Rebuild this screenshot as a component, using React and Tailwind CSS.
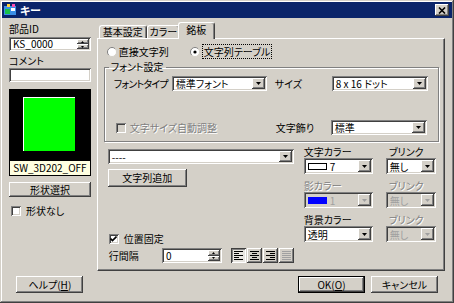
import React from 'react';

const SUNKEN = 'shadow-[inset_1px_1px_0_#808080,inset_-1px_-1px_0_#ffffff,inset_2px_2px_0_#404040,inset_-2px_-2px_0_#d4d0c8]';
const RAISED = 'shadow-[inset_-1px_-1px_0_#404040,inset_1px_1px_0_#ffffff,inset_-2px_-2px_0_#808080]';
const PRESSED = 'shadow-[inset_1px_1px_0_#404040,inset_-1px_-1px_0_#ffffff,inset_2px_2px_0_#808080]';
const GRAY = 'text-[#808080] [text-shadow:1px_1px_0_#ffffff]';

function Tri({ up, color = '#000', w = 5, h = 3 }) {
  return (
    <svg width={w} height={h} viewBox={`0 0 ${w} ${h}`} className="block">
      <path d={up ? `M${w / 2} 0L${w} ${h}H0z` : `M0 0H${w}L${w / 2} ${h}z`} fill={color} />
    </svg>
  );
}

function Select({ className = '', disabled, children }) {
  return (
    <div className={`flex p-[2px] ${disabled ? 'bg-[#d4d0c8]' : 'bg-white'} ${SUNKEN} ${className}`}>
      <div className={`flex-1 min-w-0 flex items-center pl-[2px] gap-[3px] leading-[11px] ${disabled ? 'text-[#a0a0a0]' : ''}`}>
        {children}
      </div>
      <span className={`w-[13px] h-full bg-[#d4d0c8] flex items-center justify-center ${RAISED}`}>
        <Tri color={disabled ? '#a0a0a0' : '#000'} />
      </span>
    </div>
  );
}

function Spin({ className = '', value }) {
  return (
    <div className={`flex p-[2px] bg-white ${SUNKEN} ${className}`}>
      <div className="flex-1 flex items-center pl-[2px] leading-[10px]">{value}</div>
      <div className="w-[12px] flex flex-col">
        <span className={`flex-1 bg-[#d4d0c8] flex items-center justify-center ${RAISED}`}>
          <Tri up w={3} h={2} />
        </span>
        <span className={`flex-1 bg-[#d4d0c8] flex items-center justify-center ${RAISED}`}>
          <Tri w={3} h={2} />
        </span>
      </div>
    </div>
  );
}

function Btn({ className = '', def, children }) {
  return (
    <div className={`bg-[#d4d0c8] ${def ? 'border border-black' : ''} ${className}`}>
      <div className={`w-full h-full flex items-center justify-center ${RAISED}`}>{children}</div>
    </div>
  );
}

function Check({ checked, disabled }) {
  return (
    <span className={`w-[10px] h-[10px] shrink-0 flex items-center justify-center ${disabled ? 'bg-[#d4d0c8]' : 'bg-white'} ${SUNKEN}`}>
      {checked && (
        <svg width="7" height="6" viewBox="0 0 7 6">
          <path d="M0.5 2.5L2.5 4.5L6.5 0.5" stroke="#000" strokeWidth="1.6" fill="none" />
        </svg>
      )}
    </span>
  );
}

function Radio({ checked }) {
  return (
    <svg width="10" height="10" viewBox="0 0 10 10" className="shrink-0">
      <circle cx="5" cy="5" r="4.5" fill="#fff" />
      <path d="M1.8 8.2A4.5 4.5 0 0 1 8.2 1.8" stroke="#808080" fill="none" />
      <path d="M8.2 1.8A4.5 4.5 0 0 1 1.8 8.2" stroke="#d4d0c8" fill="none" />
      {checked && <circle cx="5" cy="5" r="1.6" fill="#000" />}
    </svg>
  );
}

function Tab({ active, className = '', children }) {
  return (
    <div
      className={`${className} flex items-center justify-center bg-[#d4d0c8] border-t border-l border-r border-t-white border-l-white border-r-[#404040] rounded-t-[3px] shadow-[inset_-1px_0_0_#808080] ${
        active ? 'relative z-10 h-[17px] -mb-[1px] -mx-[2px] pb-[2px]' : 'h-[13px]'
      }`}
    >
      {children}
    </div>
  );
}

function AlignIcon({ kind }) {
  const rows = [0.5, 2.5, 4.5, 6.5, 8.5];
  const color = kind === 'justify' ? '#a0a0a0' : '#000';
  return (
    <svg width="9" height="9" viewBox="0 0 9 9">
      {rows.map((y, i) => {
        const long = i % 2 === 0 || kind === 'justify';
        const len = long ? 9 : 5;
        let x = 0;
        if (kind === 'center') x = (9 - len) / 2;
        if (kind === 'right') x = 9 - len;
        return <line key={i} x1={x} x2={x + len} y1={y} y2={y} stroke={color} strokeWidth="1" />;
      })}
    </svg>
  );
}

const colorRows = [
  { label: '文字カラー', dim: false, color: <><span className="w-[19px] h-[7px] bg-white border border-black shrink-0" /><span>7</span></>, cdis: false },
  { label: '影カラー', dim: true, color: <><span className="w-[19px] h-[7px] bg-[#0000ff] shrink-0" /><span>1</span></>, cdis: true },
  { label: '背景カラー', dim: false, color: <span>透明</span>, cdis: false },
];

export default function App() {
  return (
    <div className="w-[454px] h-[303px] bg-[#d4d0c8] font-['Noto_Sans_CJK_JP',sans-serif] [font-feature-settings:'palt'] text-[10px] leading-[12px] whitespace-nowrap text-black p-[2px] flex flex-col overflow-hidden shadow-[inset_-1px_-1px_0_#404040,inset_1px_1px_0_#d4d0c8,inset_-2px_-2px_0_#808080,inset_2px_2px_0_#ffffff]">
      {/* title bar */}
      <div className="h-[16px] bg-[#0a246a] flex items-center pl-[1px] pr-[3px]">
        <svg width="14" height="14" viewBox="0 0 14 14" className="shrink-0">
          <rect x="1" y="3" width="12" height="9" fill="#3a8ee6" />
          <rect x="2" y="6" width="5" height="5" fill="#19c24a" />
          <rect x="8" y="5" width="4" height="3" fill="#ffffff" />
          <rect x="9" y="1" width="3" height="3" fill="#ff4fb0" />
          <rect x="4" y="1" width="3" height="3" fill="#ffd23a" />
        </svg>
        <span className="ml-[3px] text-white font-bold text-[11px]">キー</span>
        <div className={`ml-auto w-[14px] h-[12px] bg-[#d4d0c8] flex items-center justify-center ${RAISED}`}>
          <svg width="8" height="7" viewBox="0 0 8 7">
            <path d="M1 0.5L7 6.5M7 0.5L1 6.5" stroke="#000" strokeWidth="1.6" />
          </svg>
        </div>
      </div>

      <div className="flex-1 flex px-[7px] pb-[8px]">
        {/* left column */}
        <div className="w-[82px] flex flex-col pt-[5px]">
          <div className="h-[12px]">部品ID</div>
          <Spin className="mt-[2px] h-[14px]" value="KS_0000" />
          <div className="mt-[4px] h-[12px]">コメント</div>
          <div className={`mt-[1px] h-[14px] bg-white ${SUNKEN}`} />
          <div className="mt-[7px] bg-black flex flex-col px-[1px] pb-[1px]">
            <div className="h-[72px] pl-[13px] pt-[8px]">
              <div className="w-[52px] h-[54px] bg-[#00ff00] border-t border-l border-white" />
            </div>
            <div className="h-[14px] bg-[#ffffe1] flex items-center justify-center">SW_3D202_OFF</div>
          </div>
          <Btn className="mt-[6px] h-[15px]">形状選択</Btn>
          <div className="mt-[8px] h-[11px] flex items-center pl-[2px]">
            <Check />
            <span className="ml-[5px]">形状なし</span>
          </div>
          <div className="mt-auto flex justify-center">
            <Btn className="w-[67px] h-[17px]">
              <span>
                ヘルプ(<u>H</u>)
              </span>
            </Btn>
          </div>
        </div>

        {/* right column */}
        <div className="ml-[6px] w-[349px] flex flex-col pt-[5px]">
          <div className="h-[15px] flex items-end pl-[2px]">
            <Tab className="w-[48px]">基本設定</Tab>
            <Tab className="w-[33px]">カラー</Tab>
            <Tab active className="w-[37px]">
              銘板
            </Tab>
          </div>
          <div className="h-[233px] border border-t-white border-l-white border-b-[#404040] border-r-[#404040] shadow-[inset_-1px_-1px_0_#808080] flex flex-col">
            <div className="mt-[5px] h-[15px] flex items-center pl-[9px]">
              <div className="w-[83px] flex items-center">
                <Radio />
                <span className="ml-[2px]">直接文字列</span>
              </div>
              <div className="flex items-center">
                <Radio checked />
                <span className="ml-[2px] px-[2px] h-[15px] flex items-center outline outline-1 outline-dotted outline-black -outline-offset-1">
                  文字列テーブル
                </span>
              </div>
            </div>

            <fieldset className="mt-[2px] ml-[6px] mr-[5px] border border-[#808080] shadow-[1px_1px_0_#ffffff,inset_1px_1px_0_#ffffff] pb-[6px]">
              <legend className="ml-[4px] px-[2px] h-[12px]">フォント設定</legend>
              <div className="mt-[3px] h-[15px] flex items-center pl-[9px]">
                <span className="w-[58px] tracking-[-0.8px]">フォントタイプ</span>
                <Select className="w-[95px] h-[15px]">標準フォント</Select>
                <span className="ml-[8px] w-[57px]">サイズ</span>
                <Select className="w-[96px] h-[15px]">8 x 16 ドット</Select>
              </div>
              <div className="mt-[29px] h-[15px] flex items-center pl-[11px]">
                <div className="w-[160px] flex items-center">
                  <Check disabled />
                  <span className={`ml-[4px] ${GRAY}`}>文字サイズ自動調整</span>
                </div>
                <span className="w-[55px]">文字飾り</span>
                <Select className="w-[96px] h-[15px]">標準</Select>
              </div>
            </fieldset>

            <div className="mt-[4px] ml-[10px] flex flex-1 pb-[7px]">
              <div className="w-[186px] flex flex-col pt-[3px]">
                <Select className="h-[15px] w-full">----</Select>
                <Btn className="mt-[5px] w-[79px] h-[18px]">文字列追加</Btn>
                <div className="mt-auto h-[11px] flex items-center pl-[1px]">
                  <Check checked />
                  <span className="ml-[5px]">位置固定</span>
                </div>
                <div className="mt-[4px] h-[15px] flex items-center pl-[1px]">
                  <span className="w-[59px]">行間隔</span>
                  <Spin className="w-[66px] h-[15px]" value="0" />
                  <div className="ml-[9px] flex gap-[1px]">
                    {['left', 'center', 'right', 'justify'].map((k, i) => (
                      <div
                        key={k}
                        className={`w-[15px] h-[15px] flex items-center justify-center ${i === 0 ? `bg-[#e8e6e1] ${PRESSED}` : `bg-[#d4d0c8] ${RAISED}`}`}
                      >
                        <AlignIcon kind={k} />
                      </div>
                    ))}
                  </div>
                </div>
              </div>

              <div className="ml-[10px] grid grid-cols-[69px_50px] gap-x-[13px] content-start">
                {colorRows.map((r, i) => (
                  <React.Fragment key={i}>
                    <div className={`h-[12px] ${i > 0 ? 'mt-[6px]' : ''} ${r.dim ? GRAY : ''}`}>{r.label}</div>
                    <div className={`h-[12px] pl-[3px] ${i > 0 ? 'mt-[6px]' : ''} ${i > 0 ? GRAY : ''}`}>ブリンク</div>
                    <Select className="h-[16px]" disabled={r.cdis}>
                      {r.color}
                    </Select>
                    <Select className="h-[16px]" disabled={i > 0}>
                      無し
                    </Select>
                  </React.Fragment>
                ))}
              </div>
            </div>
          </div>

          <div className="mt-[5px] flex justify-end gap-[6px] pr-[7px]">
            <Btn def className="w-[67px] h-[17px]">
              <span>
                OK(<u>O</u>)
              </span>
            </Btn>
            <Btn className="w-[67px] h-[17px]">キャンセル</Btn>
          </div>
        </div>
      </div>
    </div>
  );
}
